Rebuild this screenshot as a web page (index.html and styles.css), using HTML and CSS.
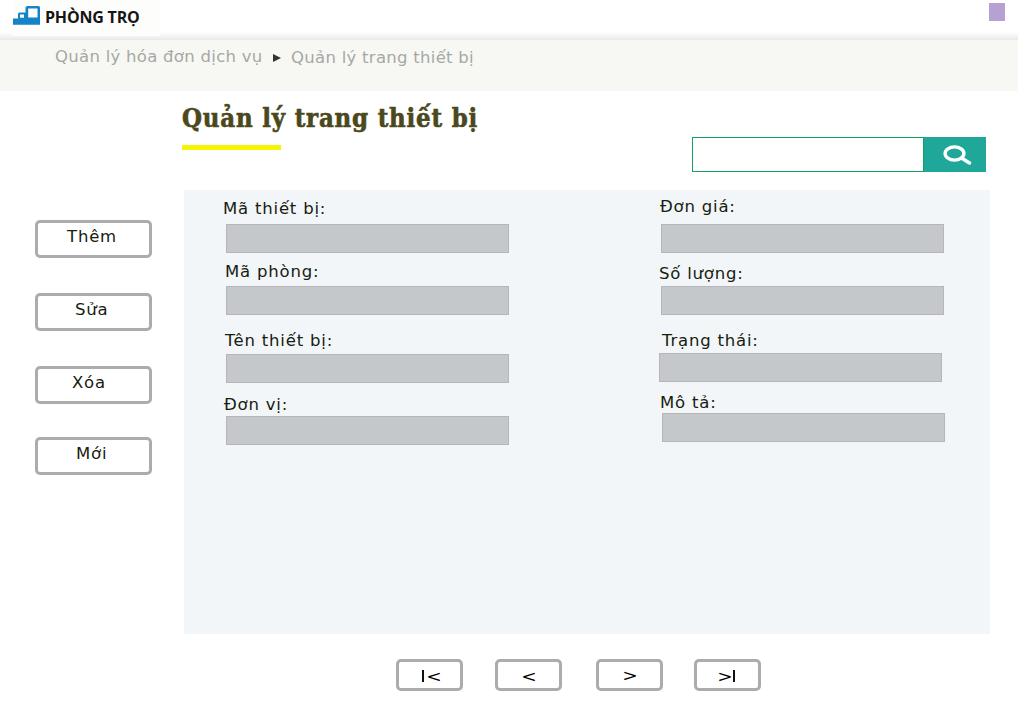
FILE: index.html
```html
<!DOCTYPE html>
<html lang="vi">
<head>
<meta charset="utf-8">
<title>Quản lý trang thiết bị</title>
<link rel="stylesheet" href="styles.css">
</head>
<body>
<header class="topbar">
  <div class="brand">
    <svg class="brand-icon" width="27" height="20" viewBox="0 0 27 20"><path fill="#1583c8" fill-rule="evenodd" d="M14.500 0H25.500Q27 0 27 1.500V18.800H0V12.500H5V8Q5 6.500 6.500 6.500H12.500V1.500Q13 0 14.500 0ZM15.200 2.500V11.500H24.500V2.500ZM7 8.600V11.800H11V8.600Z"/></svg>
    <span class="brand-name">PHÒNG TRỌ</span>
  </div>
  <span class="avatar"></span>
</header>
<nav class="crumbs">
  <a class="crumb crumb-parent">Quản lý hóa đơn dịch vụ</a>
  <svg class="crumb-arrow" width="8" height="8" viewBox="0 0 8 8"><path fill="#333" d="M0 0L8 4L0 8Z"/></svg>
  <a class="crumb crumb-current">Quản lý trang thiết bị</a>
</nav>
<section class="heading">
  <div class="title-block">
    <h1 class="title">Quản lý trang thiết bị</h1>
    <div class="underline"></div>
  </div>
  <form class="search">
    <input class="search-input" type="text" aria-label="search">
    <button class="search-button" type="button"><svg width="29" height="20" viewBox="0 0 29 20" fill="none" stroke="#fff"><ellipse cx="11.500" cy="8.500" rx="9.400" ry="6.600" stroke-width="3.400"/><path d="M18.500 13L26.500 18" stroke-width="3.500" stroke-linecap="round"/></svg></button>
  </form>
</section>
<main class="workspace">
  <aside class="actions">
    <button class="button action add"><span>Thêm</span></button>
    <button class="button action edit"><span>Sửa</span></button>
    <button class="button action remove"><span>Xóa</span></button>
    <button class="button action new"><span>Mới</span></button>
  </aside>
  <section class="panel">
    <div class="column">
      <div class="field code"><label>Mã thiết bị:</label><input type="text"></div>
      <div class="field room"><label>Mã phòng:</label><input type="text"></div>
      <div class="field name"><label>Tên thiết bị:</label><input type="text"></div>
      <div class="field unit"><label>Đơn vị:</label><input type="text"></div>
    </div>
    <div class="column">
      <div class="field price"><label>Đơn giá:</label><input type="text"></div>
      <div class="field amount"><label>Số lượng:</label><input type="text"></div>
      <div class="field state"><label>Trạng thái:</label><input type="text"></div>
      <div class="field note"><label>Mô tả:</label><input type="text"></div>
    </div>
  </section>
</main>
<footer class="pager">
  <button class="button page first"><i class="bar"></i><span>&lt;</span></button>
  <button class="button page prev"><span>&lt;</span></button>
  <button class="button page next"><span>&gt;</span></button>
  <button class="button page last"><span>&gt;</span><i class="bar"></i></button>
</footer>
</body>
</html>
```
FILE: styles.css
```css
* { box-sizing: border-box; }
body {
  margin: 0;
  width: 1020px;
  height: 717px;
  overflow: hidden;
  background: #fff;
  color: #17200f;
  font-family: "DejaVu Sans", sans-serif;
  font-size: 16.5px;
}
button, input { font: inherit; color: inherit; padding: 0; margin: 0; border-radius: 0; }
.topbar {
  display: flex;
  justify-content: space-between;
  width: 1018px;
  height: 40px;
  padding: 0 13px;
  background: linear-gradient(#fff 32px, #e9e9e9 40px);
}
.brand {
  display: flex;
  align-items: flex-start;
  width: 147px;
  height: 36px;
  padding-top: 6px;
  background: #fdfefb;
}
.brand-name {
  margin: 0 0 0 5px;
  font: bold 16px/23px "Open Sans", sans-serif;
  letter-spacing: -0.2px;
  white-space: nowrap;
  color: #151515;
}
.avatar { width: 16px; height: 18px; margin-top: 3px; background: #b7a1d2; }
.crumbs {
  display: flex;
  align-items: flex-start;
  width: 1018px;
  height: 51px;
  padding: 7px 0 0 55px;
  background: #f7f8f4;
  color: #a6a8a3;
}
.crumb { line-height: 20px; letter-spacing: 0.28px; white-space: nowrap; }
.crumb-parent { width: 207px; }
.crumb-current { margin-top: 1px; }
.crumb-arrow { margin: 7px 10px 0 11px; }
.heading {
  display: flex;
  justify-content: space-between;
  height: 99px;
  padding: 0 34px 0 182px;
}
.title {
  margin: 11px 0 0;
  font: bold 25.5px/32px "DejaVu Serif Condensed", "DejaVu Serif", serif;
  font-stretch: condensed;
  letter-spacing: 0.8px;
  -webkit-text-stroke: 0.6px #4b481e;
  white-space: nowrap;
  color: #4b481e;
}
.underline { width: 99px; height: 5px; margin-top: 11px; background: #f5f500; }
.search { display: flex; width: 294px; height: 35px; margin-top: 46px; }
.search-input { width: 232px; height: 35px; border: 1px solid #14a05e; background: #fff; }
.search-button {
  display: flex;
  width: 62px;
  height: 35px;
  padding: 8px 0 0 19px;
  border: 0;
  background: #1fa89a;
}
.workspace { display: flex; height: 444px; }
.actions { width: 184px; padding: 30px 0 0 35px; }
.button {
  display: flex;
  border: 3px solid #acacac;
  border-radius: 5px;
  background: #fff;
}
.action { width: 117px; height: 38px; line-height: 20px; letter-spacing: 0.8px; }
.action span { margin-top: 4px; }
.add { padding-left: 29px; }
.edit { margin-top: 35px; padding-left: 37px; }
.remove { margin-top: 35px; padding-left: 34px; }
.new { margin-top: 33px; padding-left: 38px; }
.panel {
  display: grid;
  grid-template-columns: 436px 1fr;
  width: 806px;
  height: 444px;
  padding-left: 40px;
  background: #f2f6f9;
}
.field label {
  display: block;
  position: relative;
  top: 1px;
  line-height: 20px;
  letter-spacing: 0.8px;
  white-space: nowrap;
}
.field input {
  display: block;
  width: 283px;
  height: 29px;
  border: 1px solid #b7b5b9;
  background: #c5c8cb;
}
.code { padding: 8px 0 0 2px; }
.code label { margin: 0 0 6px -3px; }
.room { padding: 8px 0 0 2px; }
.room label { margin: 0 0 5px -1px; }
.name { padding: 15px 0 0 2px; }
.name label { margin: 0 0 4px -1px; }
.unit { padding: 11px 0 0 2px; }
.unit label { margin: 0 0 2px -2px; }
.price { padding: 6px 0 0 1px; }
.price label { margin: 0 0 8px -1px; }
.amount { padding: 10px 0 0 1px; }
.amount label { margin: 0 0 3px -2px; }
.state { padding: 15px 0 0; margin-left: -1px; }
.state label { margin: 0 0 3px 3px; }
.note { padding: 10px 0 0 2px; }
.note label { margin: 0 0 1px -2px; }
.pager { display: flex; padding: 25px 0 0 396px; color: #000; }
.page { width: 67px; height: 32px; line-height: 20px; }
.page span { transform: scaleX(1.12); }
.bar { width: 2px; height: 12px; margin-top: 8px; background: #111; }
.first { padding-left: 23px; }
.first span { margin: 5px 0 0 3px; }
.prev { margin-left: 32px; padding-left: 24px; }
.prev span { margin-top: 5px; }
.next { margin-left: 34px; padding-left: 24px; }
.next span { margin-top: 4px; }
.last { margin-left: 31px; padding-left: 21px; }
.last span { margin: 5px 1px 0 0; }
```
